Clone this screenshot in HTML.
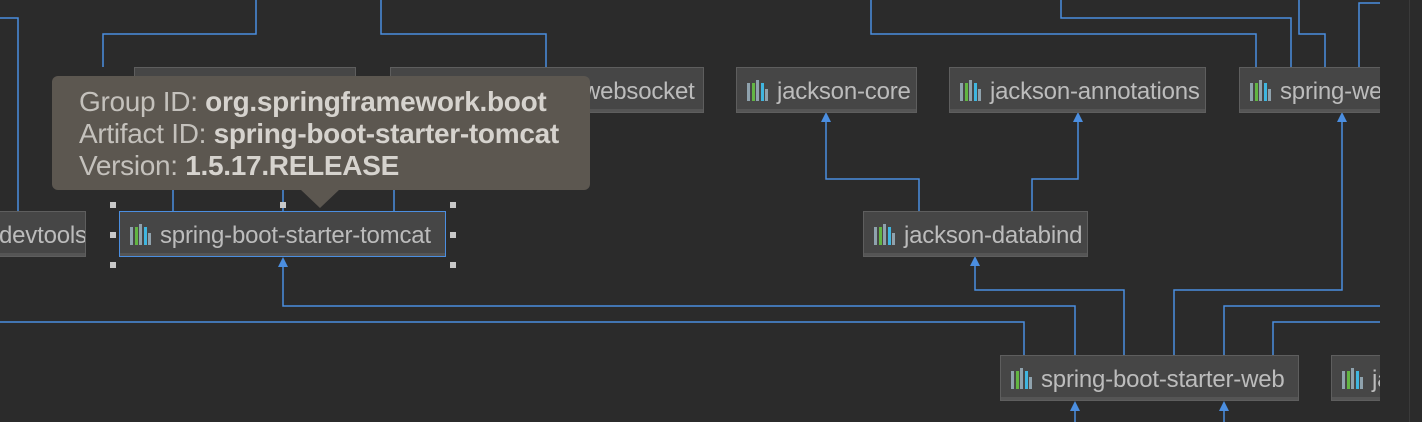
<!DOCTYPE html>
<html><head><style>
body{margin:0;width:1422px;height:422px;background:#2b2b2b;overflow:hidden;position:relative;font-family:"Liberation Sans",sans-serif}
.n{position:absolute;background:#464646;border:1px solid #5e5e5e;box-shadow:inset 0 -3px 0 #555;color:#bcbcbc;font-size:24px;line-height:47px;white-space:nowrap;overflow:hidden;box-sizing:border-box;height:46px;letter-spacing:-0.2px}
.n .i{display:inline-block;position:relative;width:24px;height:20px;margin:0 6px 0 10px;vertical-align:-2px}
.i b{position:absolute;bottom:0;width:3px}
.clip{position:absolute;left:0;top:0;width:1380px;height:422px;overflow:hidden}
.tip{position:absolute;left:52px;top:76px;width:538px;height:114px;background:#5c5750;border-radius:6px;color:#c4c1bc;font-size:28px;line-height:32px;box-sizing:border-box;padding:10px 0 0 27px;white-space:nowrap;letter-spacing:-0.3px}
.tip b{color:#d6d3ce}
.h{position:absolute;width:6px;height:6px;background:#c8c8c8}
</style></head><body>
<div class="clip">
<svg width="1380" height="422" style="position:absolute;left:0;top:0" fill="none" stroke="#4b8ee0" stroke-width="1.5">
<path d="M0 18H18V211"/>
<path d="M256 0V34H103V67"/>
<path d="M381 0V34H546V67"/>
<path d="M173 190V211M283 190V211M394 190V211"/>
<path d="M283 262V306H1075V355"/>
<path d="M0 322H1024V355"/>
<path d="M826 117V179H919V211"/>
<path d="M1078 117V179H1032V211"/>
<path d="M975 261V290H1124V355"/>
<path d="M1342 117V290H1174V355"/>
<path d="M1380 306H1224V355"/>
<path d="M1380 322H1273V355"/>
<path d="M1075 405V422M1224 405V422"/>
<path d="M871 0V34H1256V67"/>
<path d="M1061 0V18H1291V67"/>
<path d="M1299 0V34H1325V67"/>
<path d="M1359 67V3H1380"/>
</svg>
<svg width="1380" height="422" style="position:absolute;left:0;top:0" fill="#4b8ee0">
<path d="M283 257l-5 10h10z"/><path d="M826 112l-5 10h10z"/><path d="M1078 112l-5 10h10z"/><path d="M975 256l-5 10h10z"/><path d="M1342 112l-5 10h10z"/><path d="M1075 401l-5 10h10z"/><path d="M1224 401l-5 10h10z"/>
</svg>
<div class="n" style="left:-20px;top:211px;width:106px"><span style="margin-left:18px">devtools</span></div>
<div class="n" style="left:134px;top:67px;width:222px"></div>
<div class="n" style="left:390px;top:67px;width:314px"><span style="margin-left:192px">websocket</span></div>
<div class="n" style="left:119px;top:211px;width:327px;border-color:#4b8ee0"><span class="i"><b style="left:0;height:18px;background:#8fa2ad"></b><b style="left:4.5px;height:18px;background:#62b543"></b><b style="left:9px;height:21px;background:#8fa2ad"></b><b style="left:13.5px;height:18px;background:#40b6e0"></b><b style="left:18px;height:12px;background:#8fa2ad"></b></span>spring-boot-starter-tomcat</div>
<div class="n" style="left:736px;top:67px;width:181px"><span class="i"><b style="left:0;height:18px;background:#8fa2ad"></b><b style="left:4.5px;height:18px;background:#62b543"></b><b style="left:9px;height:21px;background:#8fa2ad"></b><b style="left:13.5px;height:18px;background:#40b6e0"></b><b style="left:18px;height:12px;background:#8fa2ad"></b></span>jackson-core</div>
<div class="n" style="left:949px;top:67px;width:257px"><span class="i"><b style="left:0;height:18px;background:#8fa2ad"></b><b style="left:4.5px;height:18px;background:#62b543"></b><b style="left:9px;height:21px;background:#8fa2ad"></b><b style="left:13.5px;height:18px;background:#40b6e0"></b><b style="left:18px;height:12px;background:#8fa2ad"></b></span>jackson-annotations</div>
<div class="n" style="left:1239px;top:67px;width:200px"><span class="i"><b style="left:0;height:18px;background:#8fa2ad"></b><b style="left:4.5px;height:18px;background:#62b543"></b><b style="left:9px;height:21px;background:#8fa2ad"></b><b style="left:13.5px;height:18px;background:#40b6e0"></b><b style="left:18px;height:12px;background:#8fa2ad"></b></span>spring-web</div>
<div class="n" style="left:863px;top:211px;width:225px"><span class="i"><b style="left:0;height:18px;background:#8fa2ad"></b><b style="left:4.5px;height:18px;background:#62b543"></b><b style="left:9px;height:21px;background:#8fa2ad"></b><b style="left:13.5px;height:18px;background:#40b6e0"></b><b style="left:18px;height:12px;background:#8fa2ad"></b></span>jackson-databind</div>
<div class="n" style="left:1000px;top:355px;width:299px"><span class="i"><b style="left:0;height:18px;background:#8fa2ad"></b><b style="left:4.5px;height:18px;background:#62b543"></b><b style="left:9px;height:21px;background:#8fa2ad"></b><b style="left:13.5px;height:18px;background:#40b6e0"></b><b style="left:18px;height:12px;background:#8fa2ad"></b></span>spring-boot-starter-web</div>
<div class="n" style="left:1331px;top:355px;width:150px"><span class="i"><b style="left:0;height:18px;background:#8fa2ad"></b><b style="left:4.5px;height:18px;background:#62b543"></b><b style="left:9px;height:21px;background:#8fa2ad"></b><b style="left:13.5px;height:18px;background:#40b6e0"></b><b style="left:18px;height:12px;background:#8fa2ad"></b></span>jackson</div>
<div class="h" style="left:110px;top:202px"></div><div class="h" style="left:280px;top:202px"></div><div class="h" style="left:450px;top:202px"></div>
<div class="h" style="left:110px;top:232px"></div><div class="h" style="left:450px;top:232px"></div>
<div class="h" style="left:110px;top:262px"></div><div class="h" style="left:450px;top:262px"></div>
<div class="tip">Group ID: <b>org.springframework.boot</b><br>Artifact ID: <b>spring-boot-starter-tomcat</b><br>Version: <b>1.5.17.RELEASE</b></div>
<svg width="40" height="20" style="position:absolute;left:300px;top:189px"><path d="M0 0H40L20 19z" fill="#5c5750"/></svg>
</div>
<div style="position:absolute;left:1409px;top:0;width:1px;height:422px;background:#3a3a3a"></div>
</body></html>
